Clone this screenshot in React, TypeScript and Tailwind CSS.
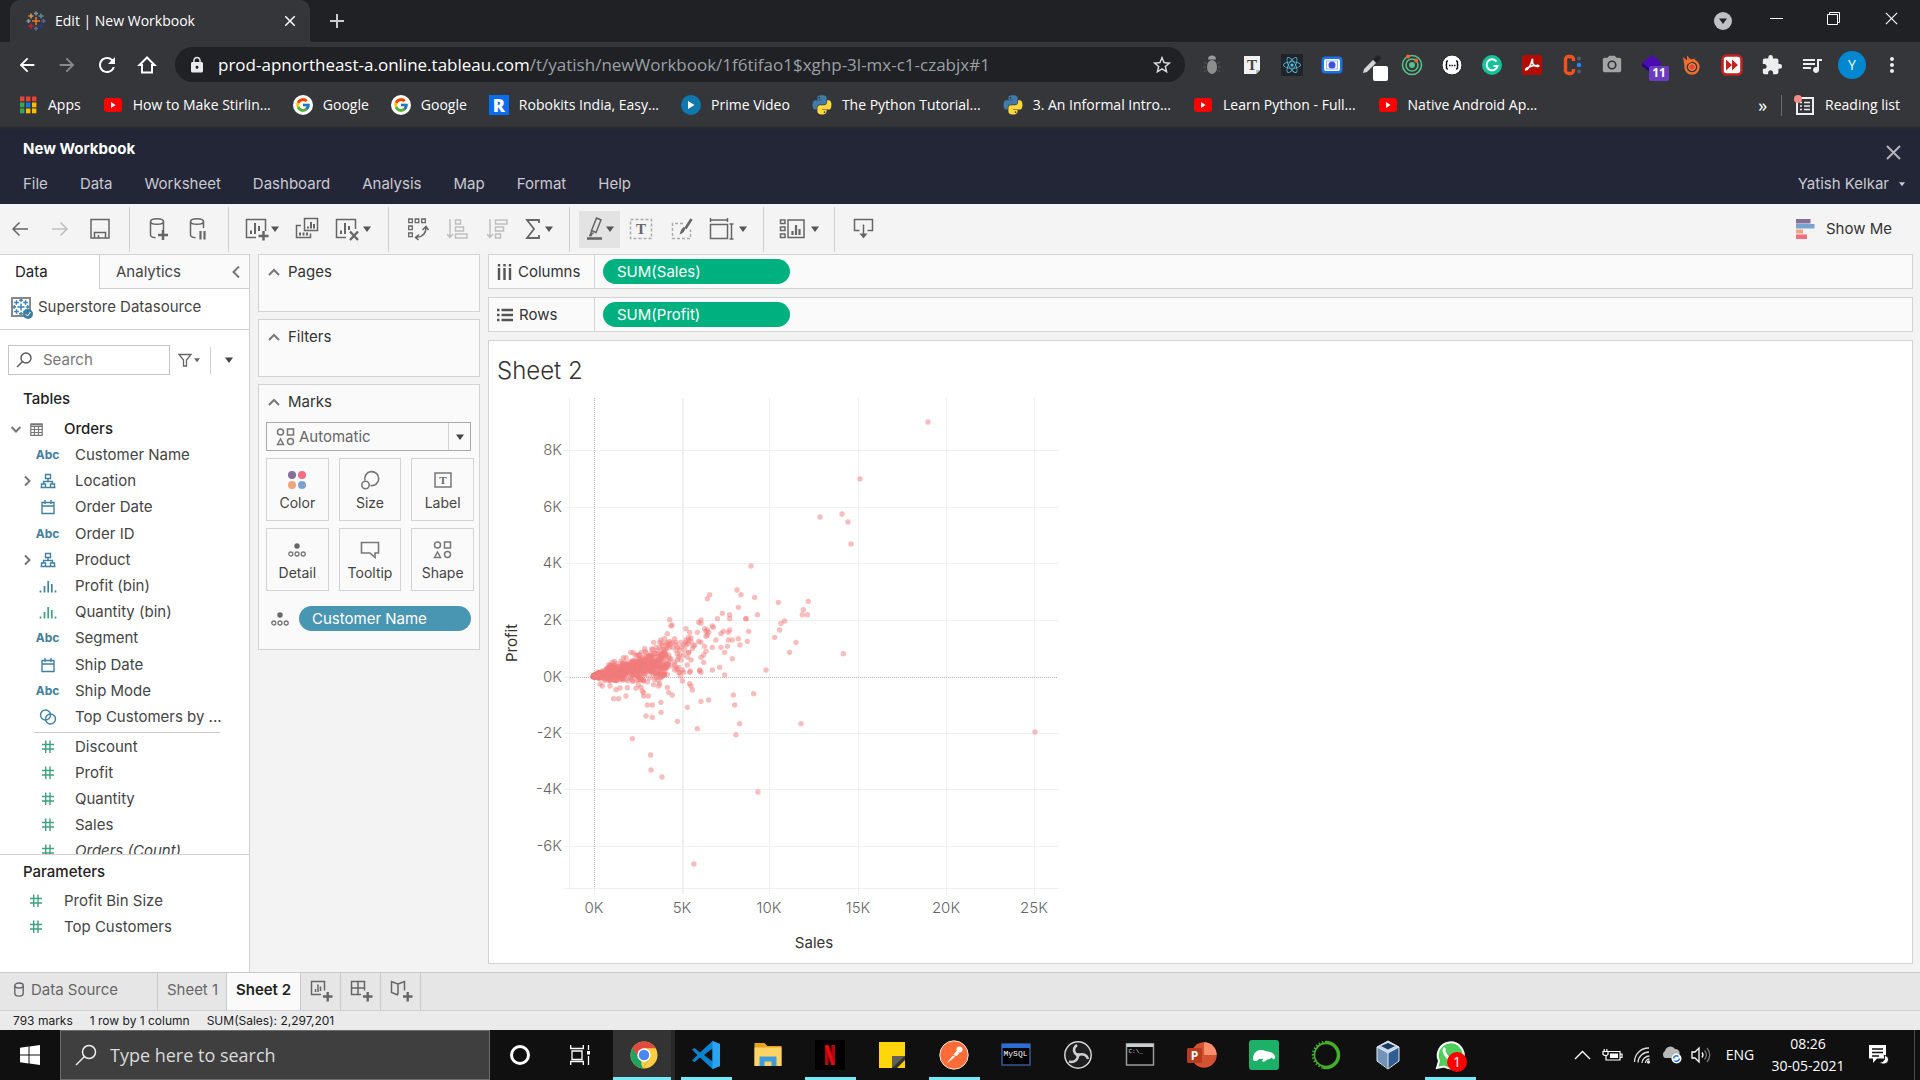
import React from 'react';
import type { ReactNode } from 'react';
import {
  MdArrowBack, MdArrowForward, MdRefresh, MdLock, MdStarBorder, MdExtension, MdQueueMusic, MdMoreVert, MdClose, MdAdd, MdPhotoCamera,
} from 'react-icons/md';
import { FcGoogle } from 'react-icons/fc';
import { FaReact } from 'react-icons/fa';

/* ---------- shared pieces ---------- */

const Caret = ({ className = 'text-[#555]' }: { className?: string }) => (
  <svg width="8" height="6" viewBox="0 0 8 6" className={className} aria-hidden="true"><path d="M0 0.5h8L4 6z" fill="currentColor" /></svg>
);

const Cross = ({ size = 15, className = '', w = 2 }: { size?: number; className?: string; w?: number }) => (
  <svg width={size} height={size} viewBox="0 0 15 15" className={className} aria-hidden="true"><path d="M1 1l13 13M14 1L1 14" stroke="currentColor" strokeWidth={w} /></svg>
);

const TABLEAU_CROSSES: [number, number, number, string][] = [
  [10, 10, 4, '#e8762b'], [10, 2.5, 2, '#6b98a5'], [10, 17.5, 2, '#5b6591'], [2.5, 10, 2, '#7b9cab'], [17.5, 10, 2, '#5c6692'],
  [5, 5, 2.6, '#e0913a'], [15, 5, 2.6, '#5b879b'], [5, 15, 2.6, '#c72037'], [15, 15, 2.6, '#1f457e'],
];

const TableauMark = ({ mono }: { mono?: string }) => (
  <svg width="20" height="20" viewBox="0 0 20 20" aria-hidden="true">
    {TABLEAU_CROSSES.map(([x, y, r, c], i) => (
      <path key={i} d={`M${x - r} ${y}h${r * 2}M${x} ${y - r}v${r * 2}`} stroke={mono ?? c} strokeWidth="1.6" />
    ))}
  </svg>
);

/* ---------- browser chrome ---------- */

const YouTube = () => (
  <svg width="20" height="20" viewBox="0 0 20 20" aria-hidden="true"><rect x="1" y="3" width="18" height="14" rx="3" fill="#f00" /><path d="M8 7v6l4.6-3z" fill="#fff" /></svg>
);
const Google = () => (
  <span className="flex size-5 items-center justify-center rounded-full bg-white"><FcGoogle className="size-4" /></span>
);
const Python = () => (
  <svg width="20" height="20" viewBox="10 0 108 108" aria-hidden="true">
    <path fill="#3f7cac" d="M63.391 1.988c-4.222.02-8.252.379-11.8 1.007-10.45 1.846-12.346 5.71-12.346 12.837v9.411h24.693v3.137H29.977c-7.176 0-13.46 4.313-15.426 12.521-2.268 9.405-2.368 15.275 0 25.096 1.755 7.311 5.947 12.519 13.124 12.519h8.491V67.234c0-8.151 7.051-15.34 15.426-15.34h24.665c6.866 0 12.346-5.654 12.346-12.548V15.833c0-6.693-5.646-11.72-12.346-12.837-4.244-.706-8.645-1.027-12.866-1.008zM50.037 9.557c2.55 0 4.634 2.117 4.634 4.721 0 2.593-2.083 4.69-4.634 4.69-2.56 0-4.633-2.097-4.633-4.69-.001-2.604 2.073-4.721 4.633-4.721z" />
    <path fill="#ffd83b" d="M91.682 28.38v10.966c0 8.5-7.208 15.655-15.426 15.655H51.591c-6.756 0-12.346 5.783-12.346 12.549v23.515c0 6.691 5.818 10.628 12.346 12.547 7.816 2.297 15.312 2.713 24.665 0 6.216-1.801 12.346-5.423 12.346-12.547v-9.412H63.938v-3.138h37.012c7.176 0 9.852-5.005 12.348-12.519 2.578-7.735 2.467-15.174 0-25.096-1.774-7.145-5.161-12.521-12.348-12.521h-9.27zM77.809 87.927c2.561 0 4.634 2.097 4.634 4.692 0 2.602-2.074 4.719-4.634 4.719-2.55 0-4.633-2.117-4.633-4.719 0-2.595 2.083-4.692 4.633-4.692z" />
  </svg>
);
const Apps = () => (
  <svg width="20" height="20" viewBox="0 0 20 20" aria-hidden="true">
    {['#ea4335', '#ea4335', '#ea4335', '#34a853', '#1a73e8', '#fbbc04', '#34a853', '#fbbc04', '#fbbc04'].map((c, i) => (
      <rect key={i} x={2 + (i % 3) * 6} y={1.5 + Math.floor(i / 3) * 6} width="4.4" height="4.8" fill={c} />
    ))}
  </svg>
);
const Robokits = () => (
  <span className="flex size-5 items-center justify-center bg-[#0a6cf0] text-lg leading-none font-extrabold text-white" aria-hidden="true">R</span>
);
const Prime = () => (
  <svg width="20" height="20" viewBox="0 0 20 20" aria-hidden="true"><circle cx="10" cy="10" r="10" fill="#0f79af" /><path d="M7 6v8l6.5-4z" fill="#fff" /></svg>
);

const BOOKMARKS: [string, ReactNode][] = [
  ['Apps', <Apps />], ['How to Make Stirlin...', <YouTube />], ['Google', <Google />], ['Google', <Google />],
  ['Robokits India, Easy...', <Robokits />], ['Prime Video', <Prime />], ['The Python Tutorial...', <Python />],
  ['3. An Informal Intro...', <Python />], ['Learn Python - Full...', <YouTube />], ['Native Android Ap...', <YouTube />],
];

const Svg22 = ({ children }: { children: ReactNode }) => (
  <svg width="22" height="22" viewBox="0 0 22 22" fill="none" aria-hidden="true">{children}</svg>
);

const EXTENSIONS: [string, ReactNode][] = [
  ['Debugger', <Svg22><ellipse cx="11" cy="13" rx="5" ry="7" fill="#8d8d8d" /><path d="M7 5.5a4 4 0 018 0z" fill="#9b9b9b" /><path d="M3 8l3 2M19 8l-3 2M2 13h3M17 13h3M3 18l3-2M19 18l-3-2" stroke="#55575a" /></Svg22>],
  ['Text tools', <Svg22><path d="M3 2h16v14l-4 4H3z" fill="#f1f1f1" /><path d="M15 20v-4h4z" fill="#bbb" /><text x="11" y="15.500" fontFamily="Liberation Serif, serif" fontSize="15" fontWeight="700" textAnchor="middle" fill="#444">T</text></Svg22>],
  ['React Developer Tools', <span className="flex size-[22px] items-center justify-center bg-[#20232a] text-[#53c1de]"><FaReact className="size-[18px]" /></span>],
  ['Screen recorder', <Svg22><rect x="1.500" y="3.500" width="19" height="15" rx="3" fill="#1a73e8" stroke="#1a73e8" strokeWidth="2" /><rect x="3" y="5" width="16" height="12" rx="2" fill="#fff" /><rect x="5.500" y="7" width="11" height="8" stroke="#8fb6f5" /><circle cx="11" cy="11" r="3.500" fill="#3c4fe0" /></Svg22>],
  ['Colour picker', <span className="relative"><Svg22><path d="M2 19l1-4 9-9 3 3-9 9z" fill="#d5d5d5" /><path d="M12 5l5-4 3 3-4 5z" fill="#222" /></Svg22><span className="absolute top-3 left-3 size-[15px] rounded-[2px] bg-white" /></span>],
  ['Orbit', <Svg22><circle cx="11" cy="11" r="9.500" stroke="#56c088" strokeWidth="1.600" /><circle cx="11" cy="11" r="6" stroke="#56c088" strokeWidth="1.600" /><circle cx="11" cy="11" r="3" fill="#56c088" /><circle cx="7" cy="2.500" r="2" fill="#f0652f" /><circle cx="15" cy="6.500" r="2" fill="#f0652f" /></Svg22>],
  ['JSON viewer', <Svg22><circle cx="11" cy="11" r="10" fill="#fff" stroke="#222" /><path d="M7 7q-2 0-1.500 2t-1 2q1.500 0 1 2t1.500 2M15 7q2 0 1.500 2t1 2q-1.500 0-1 2t-1.500 2" stroke="#111" strokeWidth="1.400" /><path d="M8 11.500h1.500M10.500 11.500H12M13 11.500h1.500" stroke="#111" strokeWidth="1.500" /></Svg22>],
  ['Grammarly', <Svg22><circle cx="11" cy="11" r="10" fill="#15c39a" /><path d="M15.500 7.500A5.500 5.500 0 1016.500 12H12.500" stroke="#fff" strokeWidth="2" /></Svg22>],
  ['Adobe Acrobat', <Svg22><rect x="1" y="1" width="20" height="20" rx="2" fill="#b30b00" /><path d="M5 16c2 0 5-5 6-10 .3-1.500 1-.5.500 1-.3 3 2 6 5.500 5.500 1.500-.3 1-1.500-1-1.300-3 0-6 .8-9 2.300-2 1-3 2.300-2 2.500z" stroke="#fff" strokeWidth="1.500" /></Svg22>],
  ['Clockify', <Svg22><path d="M12.500 7V5.500a3 3 0 00-3-3h-2a3 3 0 00-3 3v11a3 3 0 003 3h2a3 3 0 003-3V15" stroke="#f4511e" strokeWidth="3.400" /><circle cx="18" cy="4.500" r="2" fill="#555b66" /><circle cx="18" cy="11" r="2.300" fill="#2684fc" /><circle cx="18" cy="17.500" r="2" fill="#555b66" /></Svg22>],
  ['Screenshot', <MdPhotoCamera className="size-[22px] text-[#a5a5a5]" />],
  ['Tag assistant', <span className="relative"><Svg22><path d="M11 1l10 8-10 8-10-8z" fill="#4b0bb5" /><path d="M1 12l10 8v-4L1 9z" fill="#23057a" /></Svg22><span className="absolute top-3 left-2 flex h-[15px] w-5 items-center justify-center rounded-[2px] bg-[#6a3cc0] text-xs leading-none font-bold text-white">11</span></span>],
  ['Fire', <Svg22><circle cx="11" cy="13" r="6.500" stroke="#f36d2b" strokeWidth="2.400" /><circle cx="11" cy="13" r="3.400" fill="#e8453c" stroke="#f7a13b" /><path d="M3.500 12L2 3l4 3.500V1.500l3.500 4L15 4.500l-4 3z" fill="#f36d2b" /></Svg22>],
  ['Fast forward', <Svg22><rect x="1.500" y="1.500" width="19" height="19" rx="4" fill="#fff" stroke="#c4221f" strokeWidth="2.600" /><path d="M5 5.500l6 5.500-6 5.500zM11 5.500l6 5.500-6 5.500z" fill="#c4221f" /></Svg22>],
  ['Extensions', <MdExtension className="size-[22px] text-[#eee]" />],
  ['Media control', <MdQueueMusic className="size-6 text-[#eee]" />],
  ['Profile', <span className="flex size-7 items-center justify-center rounded-full bg-[#0288d1] text-sm text-white">Y</span>],
  ['Menu', <MdMoreVert className="size-6 text-[#eee]" />],
];

function BrowserChrome() {
  return (
    <header className="shrink-0 bg-[#35363a] font-['Open_Sans',sans-serif] text-white">
      <div className="flex h-[42px] items-end bg-[#202124]">
        <div className="ml-[10px] flex h-full w-[300px] items-center rounded-t-[10px] bg-[#35363a] pr-2 pl-4">
          <TableauMark />
          <span className="ml-[9px] text-sm">Edit | New Workbook</span>
          <button aria-label="Close tab" className="ml-auto flex size-6 items-center justify-center"><MdClose className="size-[18px]" /></button>
        </div>
        <button aria-label="New tab" className="ml-3 flex h-full w-[30px] items-center justify-center text-[#ccc]"><MdAdd className="size-6" /></button>
        <div className="ml-auto flex h-full items-start">
          <button aria-label="Search tabs" className="mt-3 mr-4 flex size-[18px] items-center justify-center rounded-full bg-[#bdc1c6]"><Caret className="text-[#202124]" /></button>
          <button aria-label="Minimize" className="flex h-9 w-[57px] items-center justify-center"><span className="h-px w-[13px] bg-white" /></button>
          <button aria-label="Restore" className="flex h-9 w-[57px] items-center justify-center">
            <svg width="13" height="13" viewBox="0 0 13 13" fill="none" stroke="#fff" aria-hidden="true"><path d="M.5 2.500h10v10H.5zM2.500 2.500v-2h10v10h-2" /></svg>
          </button>
          <button aria-label="Close" className="flex h-9 w-[58px] items-center justify-center"><Cross size={13} w={1.3} /></button>
        </div>
      </div>

      <div className="flex h-[45px] items-center pr-2 pl-[7px]">
        <button aria-label="Back" className="flex w-10 justify-center"><MdArrowBack className="size-[22px]" /></button>
        <button aria-label="Forward" className="flex w-10 justify-center"><MdArrowForward className="size-[22px] text-[#8a8b8e]" /></button>
        <button aria-label="Reload" className="flex w-10 justify-center"><MdRefresh className="size-6" /></button>
        <button aria-label="Home" className="flex w-10 justify-center">
          <svg width="20" height="20" viewBox="0 0 20 20" fill="none" stroke="#fff" strokeWidth="2" aria-hidden="true"><path d="M10 2.500L2.500 10H5v7.500h10V10h2.500z" /></svg>
        </button>
        <div className="ml-2 flex h-[35px] min-w-0 flex-1 items-center rounded-full bg-[#202124] px-3">
          <MdLock className="ml-px size-[18px] shrink-0 text-[#e8eaed]" />
          <div role="textbox" aria-label="Address" tabIndex={0} className="ml-3 min-w-0 truncate text-[17px] leading-6">
            prod-apnortheast-a.online.tableau.com<span className="text-[#9aa0a6]">/t/yatish/newWorkbook/1f6tifao1$xghp-3l-mx-c1-czabjx#1</span>
          </div>
          <button aria-label="Bookmark this tab" className="ml-auto"><MdStarBorder className="size-[22px] text-[#ddd]" /></button>
        </div>
        <div className="ml-[7px] flex">
          {EXTENSIONS.map(([name, icon]) => (
            <button key={name} aria-label={name} className="flex w-10 items-center justify-center">{icon}</button>
          ))}
        </div>
      </div>

      <nav className="flex h-[42px] items-center gap-[22px] border-b-2 border-[#28292c] pr-5 pb-1 pl-[18px] text-sm" aria-label="Bookmarks">
        {BOOKMARKS.map(([name, icon], i) => (
          <a key={i} href="#" className="flex items-center gap-[10px] whitespace-nowrap">{icon}<span>{name}</span></a>
        ))}
        <button aria-label="More bookmarks" className="ml-auto text-lg leading-none">»</button>
        <button className="-ml-2 flex items-center gap-[10px] border-l border-[#6c6d70] pl-3 whitespace-nowrap">
          <svg width="21" height="21" viewBox="0 0 21 21" fill="none" aria-hidden="true"><rect x="3" y="3" width="16" height="16" stroke="#eee" strokeWidth="2" /><path d="M6 7.500h2M10 7.500h6M6 11h2M10 11h6M6 14.500h2M10 14.500h6" stroke="#eee" strokeWidth="1.600" /><circle cx="4" cy="4" r="4" fill="#f28b82" /></svg>
          Reading list
        </button>
      </nav>
    </header>
  );
}

/* ---------- workbook header and toolbar ---------- */

function WorkbookHeader() {
  return (
    <div className="flex h-[75px] shrink-0 justify-between bg-[#232637] pr-[15px] pl-[23px] text-white">
      <div>
        <h1 className="pt-[10px] text-[15px] leading-5 font-bold">New Workbook</h1>
        <nav className="mt-[15px] flex gap-8 text-[15px] leading-5 text-[#c9cad0]">
          {['File', 'Data', 'Worksheet', 'Dashboard', 'Analysis', 'Map', 'Format', 'Help'].map((m) => <button key={m}>{m}</button>)}
        </nav>
      </div>
      <div className="flex flex-col items-end">
        <button aria-label="Close workbook" className="mt-4 mr-1 text-[#b4b5ba]"><Cross size={15} w={2} /></button>
        <button className="mt-[14px] flex items-center gap-[10px] text-[15px] leading-5 text-[#c9cad0]">Yatish Kelkar <Caret className="w-[6px] text-[#c9cad0]" /></button>
      </div>
    </div>
  );
}

const Ico = ({ w = 22, children, faint }: { w?: number; children: ReactNode; faint?: boolean }) => (
  <svg width={w} height="24" viewBox={`0 0 ${w} 24`} fill="none" stroke={faint ? '#bfbfbf' : '#666'} strokeWidth="1.500" aria-hidden="true">{children}</svg>
);
const Tool = ({ label, className, children }: { label: string; className: string; children: ReactNode }) => (
  <button aria-label={label} title={label} className={`flex items-center justify-center ${className}`}>{children}</button>
);
const Divider = () => <span className="mx-[9px] h-[45px] w-px bg-[#cfcfcf]" />;

function Toolbar() {
  return (
    <div className="flex h-[50px] shrink-0 items-center bg-[#f4f4f4]">
      <Tool label="Undo" className="h-9 w-10"><Ico w={20}><path d="M18 12H3M9.500 5.500L3 12l6.500 6.500" /></Ico></Tool>
      <Tool label="Redo" className="h-9 w-10"><Ico w={20} faint><path d="M2 12h15M10.500 5.500L17 12l-6.500 6.500" /></Ico></Tool>
      <Tool label="Save" className="h-9 w-10"><Ico w={20}><rect x="1" y="2.500" width="18" height="18.500" /><path d="M4.500 21v-5.500h11V21M8.500 21v-3" /></Ico></Tool>
      <Divider />
      <Tool label="New data source" className="h-9 w-10"><Ico><ellipse cx="9" cy="4.500" rx="6.500" ry="2.800" /><path d="M2.500 4.500v13.500c0 1.500 2 2.500 5 2.800M15.500 4.500V13" /><path d="M10 18h10M15 13v10" strokeWidth="2.500" /></Ico></Tool>
      <Tool label="Pause updates" className="h-9 w-10"><Ico><ellipse cx="9" cy="4.500" rx="6.500" ry="2.800" /><path d="M2.500 4.500v13.500c0 1.500 2 2.500 5 2.800M15.500 4.500V11" /><path d="M12.500 14v8.500M16.500 14v8.500" strokeWidth="2.200" /></Ico></Tool>
      <Divider />
      <Tool label="New worksheet" className="h-9 w-12 gap-[2px]"><Ico w={24}><path d="M11 20.500H1.500v-18h19V14" /><path d="M6 17v-3.500M10 17V6M14 14V9" strokeWidth="2" /><path d="M13.500 19h10M18.500 14v9.500" strokeWidth="2.500" /></Ico><Caret /></Tool>
      <Tool label="Duplicate" className="h-9 w-[41px]"><Ico w={24}><path d="M9.500 1.500h13v12h-13zM6 8.500H1.500v12h14V16.500" /><path d="M13 11.500V9.500M16 11.500V5M19 11.500V7M5 18.500v-3M8.500 18.500v-3M12 18.500v-3" strokeWidth="2" /></Ico></Tool>
      <Tool label="Clear sheet" className="h-9 w-[52px] gap-1"><Ico w={24}><path d="M11 20.500H1.500v-18h19V12" /><path d="M6 17v-3.500M10 17V6M14 13V9" strokeWidth="2" /><path d="M15 14.500l8 8.500M23 14.500L15 23" strokeWidth="2.400" /></Ico><Caret /></Tool>
      <Divider />
      <Tool label="Swap rows and columns" className="h-9 w-10"><Ico><path d="M1.700 2h3.600v3.600H1.700zM8.200 2h3.600v3.600H8.200zM14.700 2h3.600v3.600h-3.600zM1.700 9h3.600v3.600H1.700zM1.700 16h3.600v3.600H1.700z" strokeWidth="1.300" /><path d="M19 10.500c0 6-3.500 9.500-10 10M15.500 13l3.500-3.500 2.500 3.500M12 17.500L8.500 20.500l3 2.500" /></Ico></Tool>
      <Tool label="Sort ascending" className="h-9 w-10"><Ico faint><path d="M3 2v18M0 17l3 3.500L6 17M8.500 3h5v4h-5zM8.500 10h8v4h-8zM8.500 17h11.500v4H8.500z" /></Ico></Tool>
      <Tool label="Sort descending" className="h-9 w-10"><Ico faint><path d="M3 2v18M0 17l3 3.500L6 17M8.500 3h11.500v4H8.500zM8.500 10h8v4h-8zM8.500 17h5v4h-5z" /></Ico></Tool>
      <Tool label="Totals" className="h-9 w-[42px] gap-1"><Ico w={16}><path d="M14 6V3H2l7 9-7 9h12v-3" strokeWidth="1.800" /></Ico><Caret /></Tool>
      <Divider />
      <Tool label="Highlight" className="h-[37px] w-[41px] gap-px bg-[#e3e3e3]"><Ico w={20}><path d="M11.500 1l4.500 2-5 12.500-4.500-2zM6.500 14l-1 3.500 3-1.500M4 18.500h3" /><path d="M2 21.500h15" strokeWidth="2.600" /></Ico><Caret /></Tool>
      <Tool label="Show mark labels" className="h-9 w-[41px]"><Ico w={24}><rect x="1.500" y="2.500" width="21" height="19" strokeDasharray="3 2" stroke="#aaa" /><text x="12" y="17" textAnchor="middle" fontFamily="Liberation Serif, serif" fontSize="15" fontWeight="700" fill="#666" stroke="none">T</text></Ico></Tool>
      <Tool label="Format" className="h-9 w-[41px]"><Ico><path d="M12 6.500H1.500v15h18v-9" strokeDasharray="3 2" stroke="#aaa" /><path d="M20.500 2l-6 9.500" strokeWidth="2.600" /><path d="M14.500 11q-1 5-6 6.500 1-5 4-7.500z" fill="#666" stroke="none" /></Ico></Tool>
      <Tool label="Fit" className="h-9 w-[52px] gap-1"><Ico w={26}><path d="M1.500 7.500h17v14h-17zM1.500 3h17M1.500 1v4M18.500 1v4M22.500 7v15M20.500 7h4M20.500 22h4" /></Ico><Caret /></Tool>
      <Divider />
      <Tool label="Show or hide cards" className="h-9 w-[52px] gap-[6px]"><Ico w={26}><rect x="9" y="3" width="16" height="17.500" /><path d="M1.500 3h4.500v3.600H1.500zM1.500 10h4.500v3.600H1.500zM1.500 17h4.500v3.600H1.500z" /><path d="M13.500 18v-4M17 18V8M20.500 18v-6" strokeWidth="2.200" /></Ico><Caret /></Tool>
      <Divider />
      <Tool label="Presentation mode" className="h-9 w-10"><Ico><path d="M6.500 13.500H1.500V2.500h18v11h-5M10.500 7.500v11" /><path d="M6.500 16.500h8l-4 5z" fill="#666" stroke="none" /></Ico></Tool>
      <button className="mr-7 ml-auto flex items-center gap-[11px] text-[15px] leading-5 text-[#333]">
        <svg width="19" height="20" viewBox="0 0 19 20" aria-hidden="true"><path d="M0 0h14.500v4.500H0z" fill="#84709b" /><path d="M0 5h18.500v4.500H0z" fill="#7ba3cf" /><path d="M0 10.500h7v4H0z" fill="#f0a57f" /><path d="M0 15.500h11v4.500H0z" fill="#f46d80" /></svg>
        Show Me
      </button>
    </div>
  );
}

/* ---------- data pane ---------- */

const BLUE = '#4080a0';
const GREEN = '#3fa27c';

type Kind = 'abc' | 'geo' | 'date' | 'bin' | 'gbin' | 'set' | 'num';

function FieldIcon({ kind }: { kind: Kind }) {
  if (kind === 'abc') return <span className="text-xs leading-none font-bold text-[#4080a0]" aria-hidden="true">Abc</span>;
  const color = kind === 'num' || kind === 'gbin' ? GREEN : BLUE;
  return (
    <svg width="18" height="16" viewBox="0 0 18 16" fill="none" stroke={color} strokeWidth="1.400" aria-hidden="true">
      {kind === 'geo' && <path d="M6.500 1.500h5v4h-5zM2.500 11h4v3.500h-4zM11.500 11h4v3.500h-4zM9 5.500v3M4.500 11V8.500h9V11M1.500 14.500h15" />}
      {kind === 'date' && <path d="M3 3.500h12v11H3zM3 7h12M6 1v4M12 1v4" />}
      {(kind === 'bin' || kind === 'gbin') && <path d="M1.500 12.500v2M5.500 8v6.500M9.200 3v11.500M12.800 6v8.500M16.500 12.500v2" strokeWidth="1.700" />}
      {kind === 'set' && <><circle cx="6.500" cy="6" r="5" /><circle cx="11.500" cy="10" r="5" /></>}
      {kind === 'num' && <path d="M3 5.500h12M3 10h12M6.700 1.500v12.500M11 1.500v12.500" />}
    </svg>
  );
}

const Chevron = ({ d }: { d: 'up' | 'down' | 'left' | 'right' }) => {
  const p = { up: 'M1 9l5-5 5 5', down: 'M1.500 4l4.500 4.500L10.500 4', left: 'M9 0.500L3.500 6 9 11.500', right: 'M4 1.500L8.500 6 4 10.500' }[d];
  return <svg width="12" height="12" viewBox="0 0 12 12" fill="none" stroke="#777" strokeWidth="2" aria-hidden="true"><path d={p} /></svg>;
};

const DIMENSIONS: [Kind, string][] = [
  ['abc', 'Customer Name'], ['geo', 'Location'], ['date', 'Order Date'], ['abc', 'Order ID'], ['geo', 'Product'], ['bin', 'Profit (bin)'],
  ['gbin', 'Quantity (bin)'], ['abc', 'Segment'], ['date', 'Ship Date'], ['abc', 'Ship Mode'], ['set', 'Top Customers by ...'],
];
const MEASURES = ['Discount', 'Profit', 'Quantity', 'Sales'];

const Field = ({ kind, name, italic }: { kind: Kind; name: string; italic?: boolean }) => (
  <li className="flex h-[26px] shrink grow items-center">
    <span className="flex w-[34px] justify-end pr-px">{kind === 'geo' && <Chevron d="right" />}</span>
    <span className="flex w-[27px] justify-center"><FieldIcon kind={kind} /></span>
    <span className={italic ? 'ml-[14px] whitespace-nowrap italic' : 'ml-[14px] whitespace-nowrap'}>{name}</span>
  </li>
);

function DataPane() {
  return (
    <aside className="flex w-[250px] shrink-0 flex-col border-r border-[#d0d0d0] bg-white">
      <div className="flex h-[35px] shrink-0 border-t border-[#d4d4d4]" role="tablist">
        <button role="tab" aria-selected="true" className="w-[99px] pl-[15px] text-left text-[#222]">Data</button>
        <div className="flex flex-1 items-center justify-between border-b border-l border-[#d0d0d0] bg-[#fafafa] pr-[7px] pl-4">
          <button role="tab" aria-selected="false" className="text-[#444]">Analytics</button>
          <button aria-label="Collapse pane"><Chevron d="left" /></button>
        </div>
      </div>
      <button className="flex h-[41px] shrink-0 items-center gap-[7px] border-b border-[#d0d0d0] pb-1 pl-[11px]">
        <span className="relative flex size-5 items-center justify-center border-2 border-[#888]">
          <span className="shrink-0 scale-90"><TableauMark mono="#3b82b8" /></span>
          <svg width="10" height="10" viewBox="0 0 10 10" className="absolute -right-1 -bottom-1" aria-hidden="true"><circle cx="5" cy="5" r="5" fill="#3c7f9e" /><path d="M2.500 5l2 2 3-4" stroke="#fff" fill="none" /></svg>
        </span>
        Superstore Datasource
      </button>
      <div className="mt-[15px] flex h-[30px] shrink-0 items-center pl-2">
        <label className="flex h-full w-[162px] items-center border border-[#c6c6c6] pl-[7px]">
          <svg width="16" height="16" viewBox="0 0 16 16" fill="none" stroke="#555" strokeWidth="1.400" aria-hidden="true"><circle cx="10" cy="6" r="5" /><path d="M6.500 9.500L1 15" /></svg>
          <input aria-label="Search fields" placeholder="Search" className="ml-[11px] w-28 bg-transparent outline-none placeholder:text-[#777]" />
        </label>
        <button aria-label="Filter fields" className="ml-2 flex items-center gap-[2px]">
          <svg width="14" height="14" viewBox="0 0 14 14" fill="none" stroke="#666" strokeWidth="1.300" aria-hidden="true"><path d="M1 1.500h12L8.500 7v6h-3V7z" /></svg>
          <Caret className="w-[6px] text-[#666]" />
        </button>
        <span className="mx-[10px] h-[27px] w-px bg-[#d0d0d0]" />
        <button aria-label="More options" className="ml-1"><Caret className="text-[#444]" /></button>
      </div>
      <div className="min-h-0 flex-1 overflow-hidden">
        <h2 className="mt-[14px] h-5 pl-[23px] leading-5 font-medium text-[#222]">Tables</h2>
        <button className="mt-[7px] flex h-[26px] items-center pl-[10px] font-medium text-[#222]">
          <Chevron d="down" />
          <svg width="13" height="13" viewBox="0 0 13 13" fill="none" stroke="#777" strokeWidth="1.200" className="mr-[21px] ml-2" aria-hidden="true"><path d="M.8 1h11.400v11.400H.8zM1 3.500h11M1 6.500h11M1 9.500h11M4.500 3v9.500M8.500 3v9.500" /><path d="M.8 1.500h11.400" strokeWidth="2" /></svg>
          Orders
        </button>
        <ul className="flex h-[288px] flex-col">
          {DIMENSIONS.map(([k, n]) => <Field key={n} kind={k} name={n} />)}
        </ul>
        <hr className="mt-[2px] mr-[29px] mb-px ml-[34px] border-[#ccc]" />
        <ul className="flex flex-col">
          {MEASURES.map((n) => <Field key={n} kind="num" name={n} />)}
          <Field kind="num" name="Orders (Count)" italic />
        </ul>
      </div>
      <div className="h-[118px] shrink-0 border-t border-[#d0d0d0]">
        <h2 className="mt-[7px] mb-[6px] pl-[23px] leading-5 font-medium text-[#222]">Parameters</h2>
        {['Profit Bin Size', 'Top Customers'].map((n) => (
          <button key={n} className="flex h-[26px] items-center pl-[27px]"><FieldIcon kind="num" /><span className="ml-[19px]">{n}</span></button>
        ))}
      </div>
    </aside>
  );
}

/* ---------- cards ---------- */

const ShapeGlyph = () => (
  <svg width="19" height="18" viewBox="0 0 19 18" fill="none" stroke="#777" strokeWidth="1.500" aria-hidden="true"><circle cx="4.500" cy="4" r="3" /><path d="M11.500 1h6v6h-6zM1.500 16.500l3-5.500 3 5.500z" /><circle cx="14.500" cy="13.500" r="3" /></svg>
);
const DetailGlyph = () => (
  <svg width="18" height="16" viewBox="0 0 18 16" fill="none" stroke="#777" strokeWidth="1.300" aria-hidden="true"><circle cx="9" cy="4" r="2.700" fill="#666" stroke="none" /><circle cx="2.800" cy="12" r="2" /><circle cx="9" cy="12" r="2" /><circle cx="15.200" cy="12" r="2" /></svg>
);

const MARK_BUTTONS: [string, ReactNode][] = [
  ['Color', <svg width="18" height="18" viewBox="0 0 18 18" aria-hidden="true"><circle cx="4" cy="4" r="4" fill="#84709b" /><circle cx="14" cy="4" r="4" fill="#f46d80" /><circle cx="4" cy="14" r="4" fill="#f0a57f" /><circle cx="14" cy="14" r="4" fill="#7ba3cf" /></svg>],
  ['Size', <svg width="20" height="20" viewBox="0 0 20 20" fill="none" stroke="#777" strokeWidth="1.600" aria-hidden="true"><path d="M5 10.500A7 7 0 1110.500 15.500" /><circle cx="5.500" cy="15" r="3.700" /></svg>],
  ['Label', <svg width="18" height="18" viewBox="0 0 18 18" fill="none" stroke="#777" strokeWidth="1.500" aria-hidden="true"><path d="M1 2h16v14H1z" /><text x="9" y="13" textAnchor="middle" fontFamily="Liberation Serif, serif" fontSize="11" fontWeight="700" fill="#666" stroke="none">T</text></svg>],
  ['Detail', <DetailGlyph />],
  ['Tooltip', <svg width="20" height="18" viewBox="0 0 20 18" fill="none" stroke="#777" strokeWidth="1.600" aria-hidden="true"><path d="M1.500 1.500h17v10.500h-3.500v4.500l-5-4.500H1.500z" /></svg>],
  ['Shape', <ShapeGlyph />],
];

const CardTitle = ({ children }: { children: ReactNode }) => (
  <h2 className="flex h-[34px] items-center gap-2 pl-[9px] text-[#333]"><Chevron d="up" />{children}</h2>
);

function Cards() {
  return (
    <div className="ml-2 flex w-[222px] shrink-0 flex-col gap-[7px]">
      <section className="h-[58px] border border-[#d3d3d3] bg-[#fafafa]"><CardTitle>Pages</CardTitle></section>
      <section className="h-[58px] border border-[#d3d3d3] bg-[#fafafa]"><CardTitle>Filters</CardTitle></section>
      <section className="border border-[#d3d3d3] bg-[#fafafa] pb-[18px]">
        <CardTitle>Marks</CardTitle>
        <div className="relative mr-2 ml-[7px] mt-[3px] flex h-[29px] items-center border border-[#aaa] bg-[#fafafa] pl-[9px]">
          <ShapeGlyph />
          <select aria-label="Mark type" className="h-full flex-1 appearance-none bg-transparent pl-1 text-[#666] outline-none"><option>Automatic</option></select>
          <span className="flex h-full w-[22px] items-center justify-center border-l border-[#d3d3d3]"><Caret className="text-[#444]" /></span>
        </div>
        <div className="mt-[7px] grid grid-cols-3 gap-x-[10px] gap-y-[7px] pr-[5px] pl-[7px]">
          {MARK_BUTTONS.map(([n, icon]) => (
            <button key={n} className="flex h-[63px] flex-col items-center border border-[#d3d3d3] pt-[11px] text-sm leading-5 text-[#444]">
              <span className="flex h-[20px] items-center">{icon}</span>
              <span className="mt-[3px]">{n}</span>
            </button>
          ))}
        </div>
        <div className="mt-[15px] flex items-center pr-2 pl-3">
          <DetailGlyph />
          <button className="ml-[10px] h-[25px] flex-1 rounded-full bg-[#4996b2] pl-[13px] text-left text-white">Customer Name</button>
        </div>
      </section>
    </div>
  );
}

/* ---------- scatter plot ---------- */

// Customer marks as [x, y] offsets in thirds of a pixel from the plot anchor.
const SPREAD: [number, number][] = [
  [573,18],[531,90],[449,104],[442,116],[543,104],[584,112],[655,127],[745,124],[535,142],[487,160],[472,176],[509,164],[509,176],[558,176],[558,176],
  [592,164],[730,149],[727,164],[742,164],[674,183],[663,190],[659,210],[644,232],[708,247],[689,277],[850,281],[618,330],[566,214],[562,244],[535,236],
  [540,255],[505,240],[517,240],[502,259],[490,214],[483,221],[509,210],[505,217],[468,240],[483,262],[494,277],[457,262],[517,296],[479,322],[457,330],
  [494,345],[329,179],[336,195],[333,198],[322,221],[378,206],[389,217],[393,234],[412,217],[423,180],[416,187],[423,190],[434,206],[438,214],[442,210],
  [446,217],[442,225],[457,198],[460,202],[438,229],[416,244],[423,247],[434,259],[438,274],[431,285],[423,292],[431,307],[419,330],[423,337],[419,333],
  [404,255],[397,266],[386,277],[393,300],[382,292],[389,337],[391,333],[386,240],[378,240],[378,247],[371,255],[363,247],[344,236],[348,247],[352,262],
  [359,270],[352,281],[356,292],[363,300],[382,315],[371,337],[359,337],[344,330],[348,322],[361,348],[367,363],[389,371],[393,378],[397,390],[322,382],
  [326,397],[337,405],[581,401],[520,405],[524,435],[446,420],[423,424],[382,442],[303,427],[303,457],[277,435],[262,435],[277,472],[258,468],[352,484],
  [412,506],[539,491],[723,491],[528,524],[217,536],[272,585],[265,408],[251,408],[198,408],[176,416],[161,416],[299,371],[296,378],[281,374],[243,382],
  [247,393],[251,397],[281,247],[254,266],[288,262],[303,240],[314,236],[322,247],[329,244],[326,255],[333,251],[329,262],[337,262],[322,258],[318,251],
  [348,254],[363,262],[386,251],[393,244],[378,255],[401,258],[386,232],[374,270],[386,278],[371,285],[359,285],[352,300],[344,307],[356,322],[367,330],
  [326,292],[329,300],[318,288],[326,307],[333,296],[322,315],[333,318],[344,315],[303,270],[307,285],[303,296],[299,262],[306,250],[299,247],[307,337],
  [352,328],[356,337],[348,270],[337,247],[326,285],[307,326],[311,345],[303,352],[163,304],[190,293],[198,293],[212,277],[157,307],[220,278],[120,372],
  [127,378],[150,378],[168,389],[180,384],[202,383],[228,385],[235,374],[262,366],[250,363],
];
const FAR: [number, number][] = [
  [928, 422], [860, 479], [820, 517], [842, 514], [848, 522], [851, 544], [651, 770], [662, 777], [758, 792], [694, 864], [1035, 732],
];

function clusterPoints(): [number, number][] {
  let seed = 7;
  const rnd = () => { seed = (seed * 16807) % 2147483647; return seed / 2147483647; };
  const out: [number, number][] = [];
  while (out.length < 600) {
    const d = 225 * Math.pow(rnd(), 1.35);
    const n = (rnd() + rnd() + rnd() + rnd() - 2) * 1.7;
    const sd = d < 60 ? 1 + 0.24 * d : 15.4 + 0.07 * (d - 60);
    if (Math.abs(n) > 2.1) continue;
    out.push([100 + d, 349 - d * 0.2 + n * sd]);
  }
  return out;
}

const POINTS: [number, number][] = [
  ...[...clusterPoints(), ...SPREAD].map(([x, y]): [number, number] => [560 + x / 3, 560 + y / 3]),
  ...FAR,
];

const X_TICKS: [number, string][] = [[594, '0K'], [682, '5K'], [769, '10K'], [858, '15K'], [946, '20K'], [1034, '25K']];
const Y_TICKS: [number, string][] = [[450, '8K'], [507, '6K'], [563, '4K'], [620, '2K'], [677, '0K'], [733, '-2K'], [789, '-4K'], [846, '-6K']];

function Scatter() {
  return (
    <svg width="600" height="570" viewBox="490 390 600 570" className="max-w-full" role="img" aria-label="Scatter plot of Profit against Sales by customer" fontFamily="Inter, sans-serif" fontSize="15" fill="#666">
      <g stroke="#f0f0f0" shapeRendering="crispEdges">
        <path d="M569.500 398v490M564 888.500h494.500" />
        {X_TICKS.map(([x]) => <path key={x} d={x === 594 ? 'M594.500 889v5' : `M${x + 0.5} 398v496`} strokeWidth={x === 682 ? 2 : 1} />)}
        {Y_TICKS.map(([y]) => <path key={y} d={y === 677 ? 'M564 677.500h6' : `M564 ${y + 0.5}h494.500`} />)}
      </g>
      <path d="M594.500 398v490M570 677.500h488" stroke="#b4b4b4" strokeDasharray="1 1" shapeRendering="crispEdges" />
      <g fill="#f27c7c" fillOpacity="0.5">
        {POINTS.map(([x, y], i) => <circle key={i} cx={x} cy={y} r="2.700" />)}
      </g>
      <g fontWeight="300">
        {X_TICKS.map(([x, t]) => <text key={t} x={x} y="913" textAnchor="middle">{t}</text>)}
        {Y_TICKS.map(([y, t]) => <text key={t} x="562" y={y + 5} textAnchor="end">{t}</text>)}
      </g>
      <text x="814" y="948" textAnchor="middle" fill="#333">Sales</text>
      <text transform="translate(517 643) rotate(-90)" textAnchor="middle" fill="#333">Profit</text>
    </svg>
  );
}

function Shelf({ name, icon, pill }: { name: string; icon: ReactNode; pill: string }) {
  return (
    <div className="flex h-[35px] shrink-0 items-center border border-[#d3d3d3] bg-[#fafafa]">
      <div className="flex h-full w-[106px] items-center gap-[6px] border-r border-[#d3d3d3] pl-2 text-[#333]">{icon}{name}</div>
      <button className="ml-2 h-[25px] w-[187px] rounded-full bg-[#00b180] pl-[14px] text-left text-white">{pill}</button>
    </div>
  );
}

function Viz() {
  return (
    <main className="mr-[7px] mb-2 ml-2 flex min-w-0 flex-1 flex-col gap-2">
      <Shelf name="Columns" pill="SUM(Sales)" icon={<svg width="15" height="16" viewBox="0 0 15 16" stroke="#555" strokeWidth="2.400" aria-hidden="true"><path d="M2 0v2.500M7.500 0v2.500M13 0v2.500M2 4v12M7.500 4v12M13 4v12" /></svg>} />
      <Shelf name="Rows" pill="SUM(Profit)" icon={<svg width="16" height="14" viewBox="0 0 16 14" stroke="#555" strokeWidth="2.400" aria-hidden="true"><path d="M0 2h2.500M0 7h2.500M0 12h2.500M4.500 2H16M4.500 7H16M4.500 12H16" /></svg>} />
      <section className="min-h-0 flex-1 overflow-hidden border border-[#d3d3d3] bg-white">
        <h2 className="ml-2 pt-[14px] text-2xl leading-8 font-light text-[#333]">Sheet 2</h2>
        <div className="mt-[3px] ml-px"><Scatter /></div>
      </section>
    </main>
  );
}

/* ---------- sheet tabs and status ---------- */

const PlusGlyph = 'M13 16.500h9.500M17.700 12v9.500';

function SheetTabs() {
  return (
    <div className="flex h-[38px] shrink-0 border-t border-[#c9c9c9] bg-[#e6e6e6] text-[#666]">
      <button className="flex w-[158px] items-center gap-[7px] border-r border-[#c9c9c9] pb-1 pl-[14px]">
        <svg width="10" height="15" viewBox="0 0 10 15" fill="none" stroke="#666" strokeWidth="1.400" aria-hidden="true"><ellipse cx="5" cy="3.500" rx="4.200" ry="2.500" /><path d="M.8 3.500v8c0 3.500 8.400 3.500 8.400 0v-8" /></svg>
        Data Source
      </button>
      <button className="w-[69px] border-r border-[#c9c9c9] pb-1 pl-px">Sheet 1</button>
      <button className="w-[74px] border-r border-[#c9c9c9] bg-[#fafafa] pb-1 font-semibold text-[#222]">Sheet 2</button>
      {[
        ['New worksheet', 'M11 14.500H1.500v-13h13v9M5.500 12v-3M8 12V4.500M10.500 11V6.500'],
        ['New dashboard', 'M11 14.500H1.500v-13h13v9M1.500 8h13M8 1.500v13'],
        ['New story', 'M8 14.500V4L1.500 1.500v11l6.500 2.500M8 4l6.500-2.500v9'],
      ].map(([n, d]) => (
        <button key={n} aria-label={n} className="flex w-10 items-center justify-center border-r border-[#c9c9c9] pb-[2px]">
          <svg width="23" height="22" viewBox="0 0 23 22" fill="none" stroke="#666" strokeWidth="1.500" className="ml-[2px]" aria-hidden="true"><path d={d} /><path d={PlusGlyph} strokeWidth="2.400" /></svg>
        </button>
      ))}
    </div>
  );
}

function StatusBar() {
  return (
    <div className="flex h-5 shrink-0 items-center gap-[17px] border-t border-[#d0d0d0] bg-[#ebebeb] pl-[13px] text-xs text-[#222]">
      <span>793 marks</span><span>1 row by 1 column</span><span>SUM(Sales): 2,297,201</span>
    </div>
  );
}

/* ---------- taskbar ---------- */

const Svg30 = ({ children }: { children: ReactNode }) => (
  <svg width="30" height="30" viewBox="0 0 30 30" fill="none" aria-hidden="true">{children}</svg>
);

const APPS: { name: string; running?: boolean; active?: boolean; icon: ReactNode }[] = [
  { name: 'Chrome', running: true, active: true, icon: <Svg30><circle cx="15" cy="15" r="13.500" fill="#ffcd40" /><path d="M3.300 8.250A13.500 13.500 0 0014 28.500l6.500-10.500-5.500-3z" fill="#1da462" /><path d="M15 8.250h11.700A13.500 13.500 0 0014 28.500l6.500-11z" fill="#ffcd40" /><path d="M3.300 8.250A13.500 13.500 0 0126.700 8.250H15l-6 8z" fill="#e04a3f" /><circle cx="15" cy="15" r="6.700" fill="#fff" /><circle cx="15" cy="15" r="5.200" fill="#4a86f0" /></Svg30> },
  { name: 'Visual Studio Code', running: true, icon: <Svg30><path d="M21.500 1l7.500 3v22l-7.500 3L9 17.500 3.500 22 1 20.500 6.500 15 1 9.500 3.500 8 9 12.500z" fill="#0a84d0" /><path d="M21.500 8.500v13L13 15z" fill="#101010" /><path d="M21.500 1l7.500 3v22l-7.500 3z" fill="#2aa3f2" /></Svg30> },
  { name: 'File Explorer', icon: <Svg30><path d="M1.500 3h10l3 3h14v20h-27z" fill="#e8a31c" /><path d="M1.500 7.500h27V26h-27z" fill="#fdd367" /><path d="M6.500 26v-9.500h17V26h-5v-4.500h-7V26z" fill="#3e9be0" /></Svg30> },
  { name: 'Netflix', running: true, icon: <Svg30><rect width="30" height="30" fill="#000" /><path d="M10 5h3.700v20H10zM16.300 5H20v20h-3.700z" fill="#b1060f" /><path d="M10 5h3.700L20 25h-3.700z" fill="#e50914" /></Svg30> },
  { name: 'Sticky Notes', icon: <Svg30><path d="M2 2h26v26H2z" fill="#ffd60a" /><path d="M15 16h13v12H15z" fill="#4a4a48" /><path d="M15 28V16h13z" fill="#63605a" /><path d="M28 16v12H15z" fill="#33332f" /><path d="M28 20v8h-8z" fill="#ffcf05" /></Svg30> },
  { name: 'Postman', running: true, icon: <Svg30><circle cx="15" cy="15" r="14.200" fill="#ff6c37" stroke="#f4e6df" /><path d="M7.500 23.500L17.500 11l3 2.500z" fill="#fff" /><circle cx="20.500" cy="9.500" r="3" fill="#fff" /><path d="M13 15l5 2" stroke="#ff6c37" /></Svg30> },
  { name: 'MySQL', icon: <Svg30><rect x="1" y="4" width="28" height="21" fill="#000" stroke="#35589b" strokeWidth="1.500" /><path d="M1 4h28v4H1z" fill="#2b6fd6" /><text x="2.500" y="16" fontSize="8" fill="#fff" fontFamily="Liberation Mono, monospace">MySQL</text></Svg30> },
  { name: 'OBS Studio', icon: <Svg30><circle cx="15" cy="15" r="13.200" fill="#1e1d20" stroke="#d5d5d5" strokeWidth="1.500" /><path d="M14 5c-4 3-4 7 0 10M15 15c5-2 9 0 10 4M15 15c0 5-4 8-9 6.500" stroke="#cfcfcf" strokeWidth="2.500" /><circle cx="15" cy="15" r="2" fill="#cfcfcf" /></Svg30> },
  { name: 'Command Prompt', icon: <Svg30><rect x="1.500" y="4" width="27" height="21" fill="#0b0b0b" stroke="#9a9a9a" strokeWidth="1.500" /><path d="M1.500 3.500h27v3.500h-27z" fill="#c6ccd2" /><text x="3.500" y="13" fontSize="6" fill="#ddd" fontFamily="Liberation Mono, monospace">C:\_</text></Svg30> },
  { name: 'PowerPoint', icon: <Svg30><circle cx="17" cy="15" r="12.700" fill="#d35230" /><path d="M17 2.300A12.700 12.700 0 0129.700 15H17z" fill="#ff8f6b" /><rect x="0" y="8" width="15" height="15" rx="1.500" fill="#b93a1c" /><text x="7.500" y="19.500" fontSize="12" fontWeight="700" textAnchor="middle" fill="#fff" fontFamily="Open Sans, sans-serif">P</text></Svg30> },
  { name: 'Manatee', icon: <Svg30><rect width="30" height="30" rx="3" fill="#1cb069" /><path d="M4 19c0-5 3-8.500 7-9 4-.5 5 1 8 1.500 4 .5 7 2.500 7 5.500 0 2-1 2.500-2 2l-1.500-1.500c-1 1.500-3 2-4.500 2l-2 2h-3l1-2.500H10L8 21H5z" fill="#fff" /></Svg30> },
  { name: 'Anaconda', icon: <Svg30><circle cx="15" cy="15" r="12.500" stroke="#43b02a" strokeWidth="3.500" /><path d="M14 1A14 14 0 0012 28.500" stroke="#101010" strokeWidth="2.500" strokeDasharray="2 1.500" /></Svg30> },
  { name: 'VirtualBox', icon: <Svg30><path d="M15 1l11 6-11 6L4 7z" fill="#c7d7e8" /><path d="M4 7l11 6v15L4 21z" fill="#7193b8" /><path d="M26 7l-11 6v15l11-7z" fill="#2f5d94" /><path d="M8 6l7-3 7 3-7 3.500z" fill="#183a61" /><path d="M15 1l11 6v14l-11 8-11-8V7zM4 7l11 6 11-6M15 13v15" stroke="#e5edf5" /></Svg30> },
  { name: 'WhatsApp', running: true, icon: <span className="relative"><Svg30><path d="M2 28l2-7A13 13 0 119 26.500z" fill="#4fce5d" stroke="#fff" strokeWidth="2" /><path d="M10 8c-3 3 3 13 10 13" stroke="#fff" strokeWidth="3" /></Svg30><span className="absolute top-3 left-3 flex size-5 items-center justify-center rounded-full bg-[#f00] text-sm leading-none text-white">1</span></span> },
];

function Taskbar() {
  return (
    <footer className="flex h-[50px] shrink-0 bg-[#101010] font-['Open_Sans',sans-serif] text-white">
      <button aria-label="Start" className="flex w-[60px] items-center justify-center">
        <svg width="20" height="20" viewBox="0 0 20 20" fill="#fff" aria-hidden="true"><path d="M0 2.800l8.500-1.200V9.500H0zM9.500 1.500L20 0v9.500H9.500zM0 10.500h8.500v8L0 17.300zM9.500 10.500H20V20L9.500 18.600z" /></svg>
      </button>
      <label className="flex w-[430px] items-center border border-[#6c6c6c] bg-[#3f3f3f] pl-[14px]">
        <svg width="22" height="22" viewBox="0 0 22 22" fill="none" stroke="#eee" strokeWidth="1.500" aria-hidden="true"><circle cx="14" cy="8" r="6.500" /><path d="M9.500 12.500L1 21" /></svg>
        <input aria-label="Windows search" placeholder="Type here to search" className="ml-[13px] w-80 bg-transparent text-lg leading-6 outline-none placeholder:text-[#dadada]" />
      </label>
      <button aria-label="Cortana" className="flex w-[60px] items-center justify-center"><span className="size-5 rounded-full border-[3px] border-white" /></button>
      <button aria-label="Task view" className="flex w-[60px] items-center justify-center">
        <svg width="21" height="20" viewBox="0 0 21 20" fill="none" stroke="#fff" strokeWidth="1.300" aria-hidden="true"><path d="M2 6h10v8.500H2zM.7 0v3.500h12.600V0M.7 20v-3.500h12.600V20M18.500 0v5M18.500 11v9" /><path d="M17 6h3v3.500h-3z" fill="#fff" stroke="none" /></svg>
      </button>
      <div className="ml-[3px] flex">
        {APPS.map((a) => (
          <button key={a.name} aria-label={a.name} className={a.active ? 'flex w-[62px] flex-col items-center border-r-4 border-[#282828] bg-[#333]' : 'flex w-[62px] flex-col items-center'}>
            <span className={a.active ? 'flex flex-1 items-center pt-[3px] pl-[3px]' : 'flex flex-1 items-center pt-[3px]'}>{a.icon}</span>
            <span className={a.running ? (a.active ? 'h-[3px] w-full bg-[#76e9f8]' : 'h-[3px] w-[51px] bg-[#76e9f8]') : 'h-[3px]'} />
          </button>
        ))}
      </div>
      <div className="ml-auto flex items-center text-sm">
        <button aria-label="Show hidden icons" className="flex w-[30px] justify-center"><svg width="17" height="10" viewBox="0 0 17 10" fill="none" stroke="#fff" strokeWidth="1.400" aria-hidden="true"><path d="M1 9l7.500-7.500L16 9" /></svg></button>
        <button aria-label="Battery" className="flex w-[30px] justify-center"><svg width="21" height="14" viewBox="0 0 21 14" fill="none" stroke="#fff" strokeWidth="1.200" aria-hidden="true"><path d="M5 3.500h13v8.500H4V8M18 6h2v3.500h-2M1 3.500h5v3l-1.500 1H2.500L1 6.500zM2.200 3.500V1M4.800 3.500V1" /><path d="M8 5.500h8v4.500H8z" fill="#fff" stroke="none" /></svg></button>
        <button aria-label="Wi-Fi" className="flex w-[30px] justify-center"><svg width="18" height="18" viewBox="0 0 18 18" fill="none" stroke="#ddd" strokeWidth="1.300" aria-hidden="true"><path d="M1.500 16A14 14 0 0116 2M5 16.500A11 11 0 0116 6M9 17a7.500 7.500 0 017.500-7M12.500 17a4 4 0 014-4" /><circle cx="15.500" cy="16" r="1" fill="#fff" /></svg></button>
        <button aria-label="OneDrive" className="flex w-[29px] justify-center"><svg width="21" height="18" viewBox="0 0 21 18" fill="none" aria-hidden="true"><path d="M4 12a4 4 0 010-7 5.500 5.500 0 0110-2 4 4 0 014 6v3z" fill="#b8b8b8" /><circle cx="15.500" cy="12.500" r="5" fill="#fff" /><path d="M12.500 12.500a3 3 0 015-2M18.500 12.500a3 3 0 01-5 2" stroke="#1877d2" strokeWidth="1.500" /></svg></button>
        <button aria-label="Volume" className="flex w-[30px] justify-center"><svg width="20" height="18" viewBox="0 0 20 18" fill="none" stroke="#fff" strokeWidth="1.300" aria-hidden="true"><path d="M1 6h3l4-4v14l-4-4H1zM11 6.500q2 2.500 0 5" /><path d="M13.500 4.500q4 4.500 0 9M16 2q5.500 7 0 14" stroke="#777" /></svg></button>
        <button className="flex w-[48px] justify-center">ENG</button>
        <button className="flex w-[88px] flex-col items-center leading-[22px]"><span>08:26</span><span>30-05-2021</span></button>
        <button aria-label="Notifications" className="ml-[9px] flex w-[36px] justify-center"><svg width="21" height="20" viewBox="0 0 21 20" fill="none" aria-hidden="true"><path d="M0 0h17v13.500h-9L4 18v-4.500H0z" fill="#fff" /><path d="M3 4h11M3 7.500h11M3 11h7" stroke="#101010" strokeWidth="1.300" /><path d="M15 10.500c2 4-1 7-4.500 6.500 2 3.500 9 2.500 9-2.500 0-2.500-2-4-4.500-4z" fill="#fff" stroke="#101010" /></svg></button>
        <span className="ml-[17px] h-[50px] w-[6px] border-l border-[#4a4a4a]" />
      </div>
    </footer>
  );
}

export default function App() {
  return (
    <div className="flex h-screen w-full flex-col overflow-hidden font-[Inter,sans-serif] text-[15px] leading-5 text-[#444]">
      <BrowserChrome />
      <WorkbookHeader />
      <Toolbar />
      <div className="flex min-h-0 flex-1 bg-[#f3f3f3]">
        <DataPane />
        <Cards />
        <Viz />
      </div>
      <SheetTabs />
      <StatusBar />
      <Taskbar />
    </div>
  );
}
